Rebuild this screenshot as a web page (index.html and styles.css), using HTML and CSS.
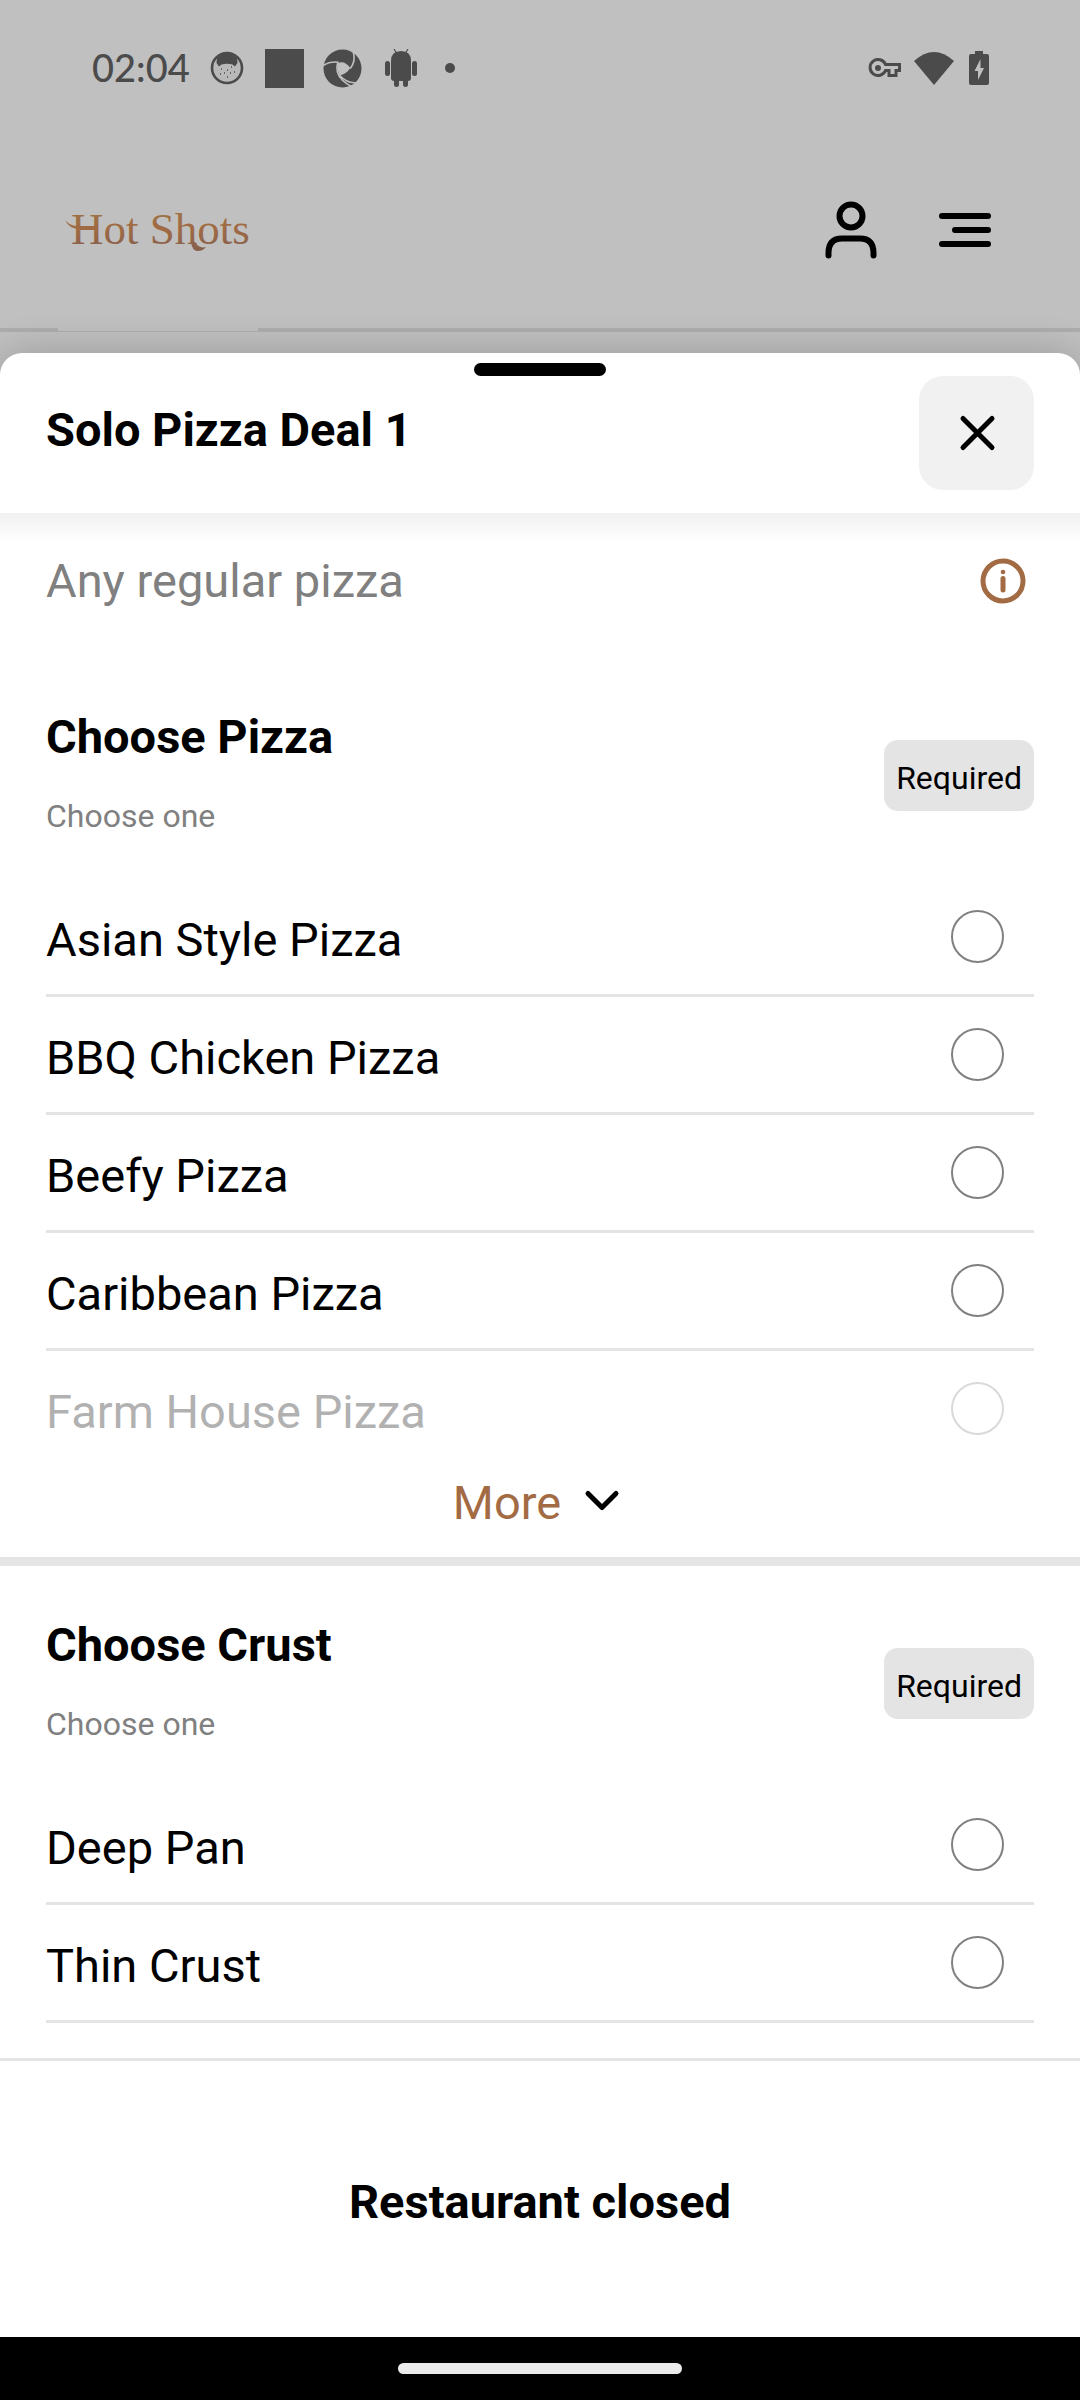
FILE: index.html
```html
<!DOCTYPE html>
<html lang="en">
<head>
<meta charset="utf-8">
<meta name="viewport" content="width=device-width, initial-scale=1">
<title>Solo Pizza Deal 1 – Hot Shots</title>
<link rel="stylesheet" href="styles.css">
</head>
<body>
<div class="status">
  <span class="clock">02:04</span>
  <svg class="status-cat" viewBox="0 0 34 34" aria-hidden="true">
    <circle cx="17" cy="17" r="15" fill="#b9b9b9" stroke="#4b4b4b" stroke-width="2.6"/>
    <path d="M7 7Q17 -2 27 7L27.500 12L25 15.500L22.500 13.500Q17 12 11.500 13.500L9 15.500L6.500 12Z" fill="#4b4b4b"/>
    <path d="M11 18h1M21 16h1M14 22h1M20 22h1M17 19h1M10 23h1M24 21h1M17 26h1" stroke="#4b4b4b" stroke-width="1.300"/>
  </svg>
  <span class="status-square"></span>
  <svg class="status-swirl" viewBox="0 0 40 40" aria-hidden="true">
    <circle cx="20" cy="20" r="19.500" fill="#4b4b4b"/>
    <path d="M15 14.500Q22 11 28 19.500Q24 26 17 27Q14 21 15 14.500Z" fill="#c0c0c0"/>
    <g fill="none" stroke="#c0c0c0" stroke-width="1.600">
      <path d="M0 17Q7 12.500 16 13.500"/>
      <path d="M31 3Q34 12 28 20"/>
      <path d="M15 14Q12 24 20 32Q24 36 30 39"/>
      <path d="M17 27Q26 37 37 34"/>
    </g>
  </svg>
  <svg class="status-android" viewBox="0 0 32 38" aria-hidden="true">
    <g fill="#4b4b4b">
      <path d="M6 12Q6 2 16 2Q26 2 26 12V29Q26 32 23 32H9Q6 32 6 29Z"/>
      <rect x="0" y="12" width="5" height="15" rx="2.500"/>
      <rect x="27" y="12" width="5" height="15" rx="2.500"/>
      <rect x="9" y="28" width="5" height="10" rx="2.500"/>
      <rect x="18" y="28" width="5" height="10" rx="2.500"/>
    </g>
    <path d="M9 0l3 5M23 0l-3 5" stroke="#4b4b4b" stroke-width="1.200"/>
  </svg>
  <span class="status-dot"></span>
  <svg class="status-key" viewBox="0 0 34 20" aria-hidden="true">
    <path d="M17.500 6.500H31.500V12.500H28V17.500H21V12.500H17.500A8 8 0 1 1 17.500 6.500Z" fill="none" stroke="#4b4b4b" stroke-width="3"/>
    <circle cx="10" cy="10" r="3" fill="#4b4b4b"/>
  </svg>
  <svg class="status-wifi" viewBox="0 0 40 33" aria-hidden="true">
    <path d="M0 9Q20 -9 40 9L20 33Z" fill="#4b4b4b"/>
  </svg>
  <svg class="status-battery" viewBox="0 0 20 34" aria-hidden="true">
    <path d="M6 0h8v3h4q2 0 2 2v27q0 2-2 2H2q-2 0-2-2V5q0-2 2-2h4Z" fill="#4b4b4b"/>
    <path d="M11.500 8L5.500 20H9V29L15 17H11.500Z" fill="#c0c0c0"/>
  </svg>
</div>

<header class="site-header">
  <a class="logo" href="#" aria-label="Hot Shots">
    <svg class="logo-art" viewBox="0 0 200 60" aria-hidden="true">
      <defs>
        <linearGradient id="copper" gradientUnits="userSpaceOnUse" x1="0" y1="6" x2="0" y2="48">
          <stop offset="0" stop-color="#9c7446"/>
          <stop offset="0.500" stop-color="#a06a43"/>
          <stop offset="1" stop-color="#86604d"/>
        </linearGradient>
      </defs>
      <text class="logo-text" x="13" y="42" fill="url(#copper)">Hot Shots</text>
      <path d="M7 18Q12 24 20 24H38V27H22Q11 27 7 18Z" fill="url(#copper)"/>
      <path d="M133 40Q134 49 140 49Q145 49 148 45Q141 47 137 40Z" fill="url(#copper)"/>
    </svg>
  </a>
  <div class="header-actions">
    <button class="icon-button" type="button" aria-label="Account">
      <svg viewBox="0 0 60 60" class="line-icon" aria-hidden="true">
        <circle cx="30" cy="16" r="11.500"/>
        <path d="M7.500 55.500V53Q7.500 38.500 21 38.500H39Q52.500 38.500 52.500 53V55.500"/>
      </svg>
    </button>
    <button class="icon-button" type="button" aria-label="Menu">
      <svg viewBox="0 0 60 60" class="line-icon" aria-hidden="true">
        <path d="M7 16H53M20 30H53M7 44H53"/>
      </svg>
    </button>
  </div>
</header>

<main class="sheet">
  <div class="sheet-top">
    <div class="grabber"></div>
    <div class="sheet-title-row">
      <h1 class="title">Solo Pizza Deal 1</h1>
      <button class="close" type="button" aria-label="Close">
        <svg viewBox="0 0 60 60" class="line-icon close-icon" aria-hidden="true">
          <path d="M16 15.500L45 44.500M45 15.500L16 44.500"/>
        </svg>
      </button>
    </div>
  </div>

  <div class="intro">
    <p class="intro-text">Any regular pizza</p>
    <button class="icon-button" type="button" aria-label="Product information">
      <svg viewBox="0 0 60 60" class="info-icon" aria-hidden="true">
        <circle cx="30" cy="30" r="20"/>
        <path d="M30 27.500V39"/>
        <circle class="info-dot" cx="30" cy="21" r="2.300"/>
      </svg>
    </button>
  </div>

  <section class="group" aria-labelledby="pizza-title">
    <div class="group-head">
      <div class="group-text">
        <h2 class="title" id="pizza-title">Choose Pizza</h2>
        <p class="hint">Choose one</p>
      </div>
      <span class="badge">Required</span>
    </div>
    <div class="options">
      <label class="option"><span class="option-name">Asian Style Pizza</span><input class="radio" type="radio" name="pizza"></label>
      <label class="option"><span class="option-name">BBQ Chicken Pizza</span><input class="radio" type="radio" name="pizza"></label>
      <label class="option"><span class="option-name">Beefy Pizza</span><input class="radio" type="radio" name="pizza"></label>
      <label class="option"><span class="option-name">Caribbean Pizza</span><input class="radio" type="radio" name="pizza"></label>
      <label class="option option-faded"><span class="option-name">Farm House Pizza</span><input class="radio" type="radio" name="pizza"></label>
    </div>
    <button class="more" type="button">
      <span>More</span>
      <svg viewBox="0 0 48 48" class="more-icon" aria-hidden="true"><path d="M9 14.500L23 28.500L37 14.500"/></svg>
    </button>
  </section>

  <section class="group group-last" aria-labelledby="crust-title">
    <div class="group-head">
      <div class="group-text">
        <h2 class="title" id="crust-title">Choose Crust</h2>
        <p class="hint">Choose one</p>
      </div>
      <span class="badge">Required</span>
    </div>
    <div class="options">
      <label class="option"><span class="option-name">Deep Pan</span><input class="radio" type="radio" name="crust"></label>
      <label class="option"><span class="option-name">Thin Crust</span><input class="radio" type="radio" name="crust"></label>
    </div>
  </section>

  <footer class="sheet-footer">
    <p class="title">Restaurant closed</p>
  </footer>
</main>

<div class="nav-bar"><span class="nav-pill"></span></div>
</body>
</html>
```

FILE: styles.css
```css
* { box-sizing: border-box; }

body {
  margin: 0;
  min-height: 100vh;
  display: flex;
  flex-direction: column;
  background: #c0c0c0;
  color: #000;
  font-family: Roboto, "Liberation Sans", sans-serif;
  font-size: 47px;
  line-height: 56px;
}

h1, h2, p { margin: 0; }

button {
  padding: 0;
  border: 0;
  background: none;
  color: inherit;
  font: inherit;
}

svg { display: block; }

/* Status bar */
.status {
  display: flex;
  align-items: center;
  padding: 44px 91px 40px 92px;
  color: #4b4b4b;
}
.clock {
  margin-right: 20px;
  padding-bottom: 2px;
  font-family: Lato, sans-serif;
  font-size: 38px;
  font-weight: 500;
  line-height: 46px;
}
.status-cat { width: 34px; height: 34px; margin-right: 21px; }
.status-square { width: 39px; height: 39px; margin-right: 19px; background: #4b4b4b; }
.status-swirl { width: 39px; height: 39px; margin-right: 23px; }
.status-android { width: 32px; height: 38px; margin-right: 28px; }
.status-dot { width: 10px; height: 10px; border-radius: 50%; background: #4b4b4b; }
.status-key { width: 34px; height: 20px; margin-left: auto; margin-right: 12px; }
.status-wifi { width: 40px; height: 33px; margin-right: 15px; }
.status-battery { width: 20px; height: 34px; }

/* Site header, behind the sheet */
.site-header {
  display: flex;
  align-items: stretch;
  justify-content: space-between;
  height: 200px;
  margin-bottom: 21px;
  padding: 0 84px 0 58px;
  border-bottom: 4px solid #adadad;
}
.logo {
  display: flex;
  align-items: center;
  margin-bottom: -3px;
  background: #c0c0c0;
}
.logo-art { width: 200px; height: 60px; }
.logo-text { font-family: "Liberation Serif", serif; font-size: 45px; }
.header-actions { display: flex; align-items: center; gap: 52px; }
.icon-button { flex: none; width: 62px; height: 62px; padding: 1px; }
.line-icon {
  width: 60px;
  height: 60px;
  fill: none;
  stroke: #000;
  stroke-width: 6;
  stroke-linecap: round;
  stroke-linejoin: round;
}

/* Bottom sheet */
.sheet {
  flex: 1;
  display: flex;
  flex-direction: column;
  border-radius: 22px 22px 0 0;
  background: #fff;
  box-shadow: 0 0 40px rgba(0, 0, 0, 0.2);
}
.title { font-size: 47px; font-weight: 700; line-height: 56px; }
.sheet-top { padding: 10px 46px 23px; }
.grabber {
  width: 132px;
  height: 13px;
  margin: 0 auto;
  border-radius: 7px;
  background: #000;
}
.sheet-title-row { display: flex; align-items: center; justify-content: space-between; }
.sheet-title-row .title { margin-bottom: 6px; }
.close {
  display: grid;
  place-items: center;
  width: 115px;
  height: 114px;
  border-radius: 24px;
  background: #f1f1f1;
}
.close-icon { stroke-width: 5; }

.intro {
  display: flex;
  align-items: center;
  justify-content: space-between;
  padding: 37px 46px 46px;
  background: linear-gradient(#f1f1f1, #fff 28px);
}
.intro-text { color: #808080; }
.info-icon {
  width: 60px;
  height: 60px;
  fill: none;
  stroke: #a36b44;
  stroke-width: 5;
  stroke-linecap: round;
}
.info-dot { fill: #a36b44; stroke: none; }

/* Option groups */
.group { border-bottom: 9px solid #e5e5e5; }
.group-last { flex: 1; padding-bottom: 35px; border-bottom: 0; }
.group-head {
  display: flex;
  align-items: center;
  justify-content: space-between;
  padding: 51px 46px 43px;
}
.hint { margin-top: 31px; color: #808080; font-size: 32px; line-height: 40px; }
.badge {
  margin-top: 6px;
  padding: 18px 12px 13px;
  border-radius: 14px;
  background: #e4e4e4;
  font-size: 32px;
  line-height: 40px;
}
.options { padding: 0 46px; }
.option {
  display: flex;
  align-items: center;
  justify-content: space-between;
  min-height: 118px;
  padding-right: 30px;
  border-bottom: 3px solid #e4e4e4;
}
.option-name { padding-top: 6px; }
.option-faded { min-height: 115px; border-bottom: 0; opacity: 0.3; }
.radio {
  appearance: none;
  flex: none;
  width: 53px;
  height: 53px;
  margin: 0;
  border: 2px solid #808080;
  border-radius: 50%;
}
.radio:checked { border: 16px solid #a36b44; }
.more {
  display: flex;
  align-items: center;
  justify-content: center;
  gap: 18px;
  width: 100%;
  padding: 9px 0 26px;
  color: #a36b44;
}
.more-icon {
  width: 48px;
  height: 48px;
  fill: none;
  stroke: #000;
  stroke-width: 5;
  stroke-linecap: round;
  stroke-linejoin: round;
}

.sheet-footer {
  padding: 113px 46px 107px;
  border-top: 3px solid #e4e4e4;
  text-align: center;
}

/* System navigation */
.nav-bar { display: flex; justify-content: center; padding: 26px 0; background: #000; }
.nav-pill { width: 284px; height: 11px; border-radius: 6px; background: #ebebeb; }
```
